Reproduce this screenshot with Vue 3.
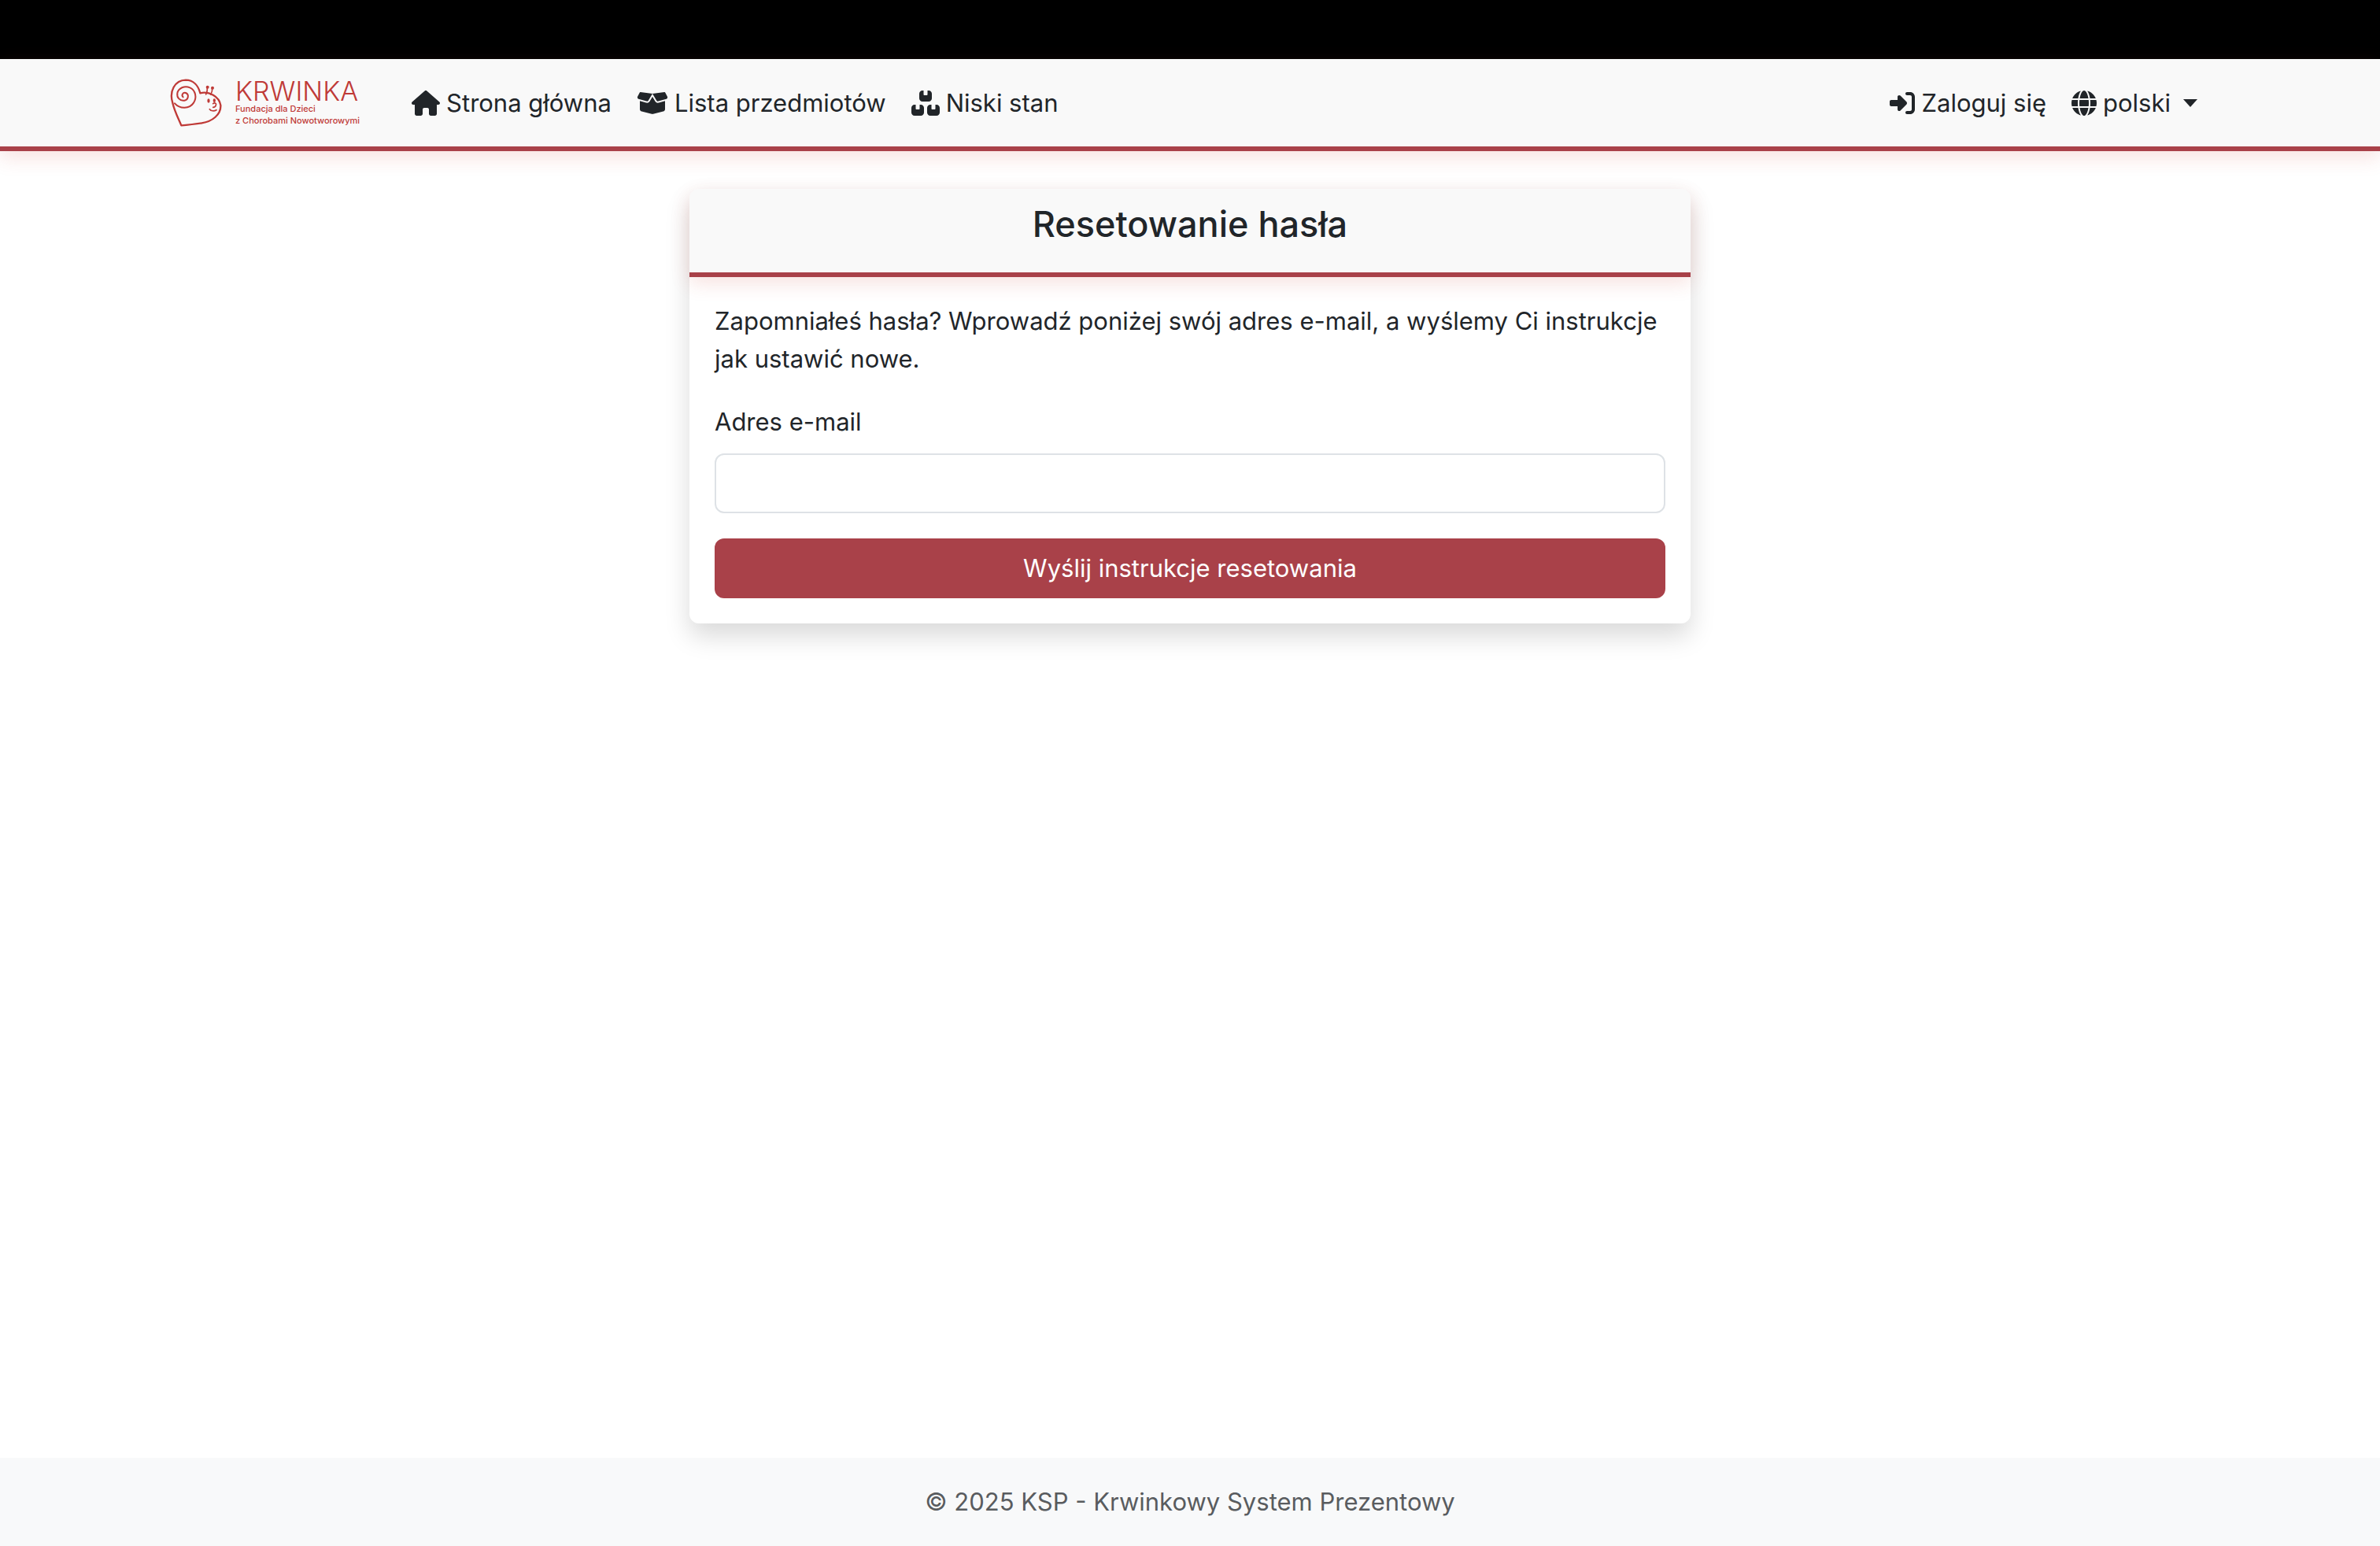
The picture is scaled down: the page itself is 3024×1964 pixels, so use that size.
<script setup>
import { ref } from 'vue'

const email = ref('')
const language = ref('pl')

const links = [
  {
    label: 'Strona główna',
    width: 576,
    path: 'M575.8 255.5c0 18-15 32.1-32 32.1h-32l.7 160.2c0 2.7-.2 5.4-.5 8.1V472c0 22.1-17.9 40-40 40H456c-1.1 0-2.2 0-3.3-.1c-1.4 .1-2.8 .1-4.2 .1H416 392c-22.1 0-40-17.9-40-40V448 384c0-17.7-14.3-32-32-32H256c-17.7 0-32 14.3-32 32v64 24c0 22.1-17.9 40-40 40H160 128.1c-1.5 0-3-.1-4.5-.2c-1.2 .1-2.4 .2-3.6 .2H104c-22.1 0-40-17.9-40-40V360c0-.9 0-1.9 .1-2.8V287.6H32c-18 0-32-14-32-32.1c0-9 3-17 10-24L266.4 8c7-7 15-8 22-8s15 2 21 7L564.8 231.5c8 7 12 15 11 24z'
  },
  {
    label: 'Lista przedmiotów',
    width: 640,
    path: 'M58.9 42.1c3-6.1 9.6-9.6 16.3-8.7L320 64 564.8 33.4c6.7-.8 13.3 2.7 16.3 8.7l41.7 83.4c9 17.9-.6 39.6-19.8 45.1L439.6 217.3c-13.9 4-28.8-1.9-36.2-14.3L320 64 236.6 203c-7.4 12.4-22.3 18.3-36.2 14.3L37.1 170.6c-19.3-5.5-28.8-27.2-19.8-45.1L58.9 42.1zM321.1 128l54.9 91.4c14.9 24.8 44.6 36.6 72.5 28.6L576 211.6v167c0 22-15 41.2-36.4 46.6l-204.1 51c-10.2 2.6-20.9 2.6-31 0l-204.1-51C79 419.7 64 400.5 64 378.5v-167L191.6 248c27.8 8 57.6-3.8 72.5-28.6L318.9 128h2.2z'
  },
  {
    label: 'Niski stan',
    width: 576,
    path: 'M248 0H224c-35.3 0-64 28.7-64 64V160c0 35.3 28.7 64 64 64H352c35.3 0 64-28.7 64-64V64c0-35.3-28.7-64-64-64H328V80c0 8.8-7.2 16-16 16H264c-8.8 0-16-7.2-16-16V0zM64 288c-35.3 0-64 28.7-64 64V448c0 35.3 28.7 64 64 64H192c35.3 0 64-28.7 64-64V352c0-35.3-28.7-64-64-64H168v80c0 8.8-7.2 16-16 16H104c-8.8 0-16-7.2-16-16V288H64zM384 512H512c35.3 0 64-28.7 64-64V352c0-35.3-28.7-64-64-64H488v80c0 8.8-7.2 16-16 16H424c-8.8 0-16-7.2-16-16V288H384c-35.3 0-64 28.7-64 64V448c0 35.3 28.7 64 64 64z'
  }
]
</script>

<template>
  <div class="page">
    <div class="strip"></div>
    <header class="navbar">
      <div class="container">
        <a class="brand" href="#">
          <svg class="snail" viewBox="0 0 198 183" aria-hidden="true">
            <g fill="none" stroke="currentColor" stroke-linecap="round" stroke-linejoin="round">
              <path stroke-width="7" d="M10 92C-4 48 18 6 60 5c30 0 48 22 55 50c34-8 72 12 78 46c2 36-32 62-72 68c-26 5-50 6-78 9C32 152 16 120 10 92" />
              <path stroke-width="6" d="M50 70c-8-8 0-20 10-16c14 6 10 26-5 29c-17 3-30-12-27-28c4-20 28-30 48-21c22 10 27 38 14 58c-16 24-52 24-72 2" />
              <path stroke-width="5" d="M137 60C142 50 143 42 142 33M155 60c5-8 7-16 6-26" />
              <path stroke-width="5" d="M151 116c5 7 16 9 26 3M164 95c7-5 14-1 11 6c-1 5-6 8-11 8" />
            </g>
            <g fill="currentColor">
              <circle cx="143" cy="32" r="6" />
              <circle cx="162" cy="35" r="6" />
              <ellipse cx="147" cy="84" rx="5" ry="8" />
              <ellipse cx="169" cy="83" rx="5" ry="7" />
            </g>
          </svg>
          <span class="brand-text">
            <span class="brand-name">KRWINKA</span>
            <span class="brand-line">Fundacja dla Dzieci</span>
            <span class="brand-line">z Chorobami Nowotworowymi</span>
          </span>
        </a>
        <nav class="links">
          <a v-for="link in links" :key="link.label" class="link" href="#">
            <svg class="icon" :viewBox="`0 0 ${link.width} 512`" aria-hidden="true"><path :d="link.path" /></svg>
            <span>{{ link.label }}</span>
          </a>
        </nav>
        <div class="links">
          <a class="link" href="#">
            <svg class="icon" viewBox="0 0 512 512" aria-hidden="true"><path d="M217.9 105.9L340.7 228.7c7.2 7.2 11.3 17.1 11.3 27.3s-4.1 20.1-11.3 27.3L217.9 406.1c-6.4 6.4-15 9.9-24 9.9c-18.7 0-33.9-15.2-33.9-33.9l0-62.1L32 320c-17.7 0-32-14.3-32-32l0-64c0-17.7 14.3-32 32-32l128 0 0-62.1c0-18.7 15.2-33.9 33.9-33.9c9 0 17.6 3.6 24 9.9zM352 416l64 0c17.7 0 32-14.3 32-32l0-256c0-17.7-14.3-32-32-32l-64 0c-17.7 0-32-14.3-32-32s14.3-32 32-32l64 0c53 0 96 43 96 96l0 256c0 53-43 96-96 96l-64 0c-17.7 0-32-14.3-32-32s14.3-32 32-32z" /></svg>
            <span>Zaloguj się</span>
          </a>
          <label class="link">
            <svg class="icon" viewBox="0 0 512 512" aria-hidden="true"><path d="M352 256c0 22.2-1.2 43.6-3.3 64H163.3c-2.2-20.4-3.3-41.8-3.3-64s1.2-43.6 3.3-64H348.7c2.2 20.4 3.3 41.8 3.3 64zm28.8-64H503.9c5.3 20.5 8.1 41.9 8.1 64s-2.8 43.5-8.1 64H380.8c2.1-20.6 3.2-42 3.2-64s-1.1-43.4-3.2-64zm112.6-32H376.7c-10-63.9-29.8-117.4-55.3-151.6c78.3 20.7 142 77.5 171.9 151.6zm-149.1 0H167.7c6.1-36.4 15.5-68.6 27-94.7c10.5-23.6 22.2-40.7 33.5-51.5C239.4 3.2 248.7 0 256 0s16.6 3.2 27.8 13.8c11.3 10.8 23 27.9 33.5 51.5c11.6 26 20.9 58.2 27 94.7zm-209 0H18.6C48.6 85.9 112.2 29.1 190.6 8.4C165.1 42.6 145.3 96.1 135.3 160zM8.1 192H131.2c-2.1 20.6-3.2 42-3.2 64s1.1 43.4 3.2 64H8.1C2.8 299.5 0 278.1 0 256s2.8-43.5 8.1-64zM194.7 446.6c-11.6-26-20.9-58.2-27-94.6H344.3c-6.1 36.4-15.5 68.6-27 94.6c-10.5 23.6-22.2 40.7-33.5 51.5C272.6 508.8 263.3 512 256 512s-16.6-3.2-27.8-13.8c-11.3-10.8-23-27.9-33.5-51.5zM135.3 352c10 63.9 29.8 117.4 55.3 151.6C112.2 482.9 48.6 426.1 18.6 352H135.3zm358.1 0c-30 74.1-93.6 130.9-171.9 151.6c25.5-34.2 45.2-87.7 55.3-151.6H493.4z" /></svg>
            <select v-model="language" class="language">
              <option value="pl">polski</option>
            </select>
            <span class="caret"></span>
          </label>
        </div>
      </div>
    </header>

    <main class="content">
      <section class="card">
        <div class="card-header">
          <h1 class="title">Resetowanie hasła</h1>
        </div>
        <form class="card-body" @submit.prevent>
          <p class="intro">Zapomniałeś hasła? Wprowadź poniżej swój adres e-mail, a wyślemy Ci instrukcje jak ustawić nowe.</p>
          <label class="label" for="email">Adres e-mail</label>
          <input id="email" v-model="email" class="input" type="email">
          <button class="submit" type="submit">Wyślij instrukcje resetowania</button>
        </form>
      </section>
    </main>

    <footer class="footer">© 2025 KSP - Krwinkowy System Prezentowy</footer>
  </div>
</template>

<style>
body {
  margin: 0;
  background: #fff;
}
</style>

<style scoped>
.page {
  display: flex;
  flex-direction: column;
  min-height: 100vh;
  color: #212529;
  font-family: Inter, "Liberation Sans", sans-serif;
  font-size: 31px;
  line-height: 48px;
}

.strip {
  height: 75px;
  background: #000;
}

.navbar {
  padding: 16px 0;
  border-bottom: 6px solid #a94149;
  background: #f9f9f9;
  box-shadow: 0 8px 24px rgba(200, 60, 50, 0.15);
}

.container {
  display: flex;
  align-items: center;
  box-sizing: border-box;
  max-width: 2640px;
  min-height: 79px;
  margin: 0 auto;
  padding: 0 24px;
}

.brand {
  display: flex;
  align-items: center;
  gap: 17px;
  margin-right: 50px;
  color: #bf3a37;
  text-decoration: none;
}

.snail {
  width: 66px;
  height: 61px;
}

.brand-text {
  display: flex;
  flex-direction: column;
}

.brand-name {
  font-size: 34px;
  font-weight: 300;
  line-height: 30px;
}

.brand-line {
  font-size: 11px;
  font-weight: 500;
  line-height: 15px;
}

.links {
  display: flex;
}

.links:last-child {
  margin-left: auto;
}

.link {
  display: flex;
  align-items: center;
  gap: 8px;
  padding: 0 16px;
  color: inherit;
  text-decoration: none;
}

.icon {
  height: 32px;
  fill: currentColor;
}

.language {
  padding: 0;
  border: 0;
  appearance: none;
  background: transparent;
  color: inherit;
  font: inherit;
}

.caret {
  margin-left: 8px;
  border-top: 10px solid;
  border-right: 9px solid transparent;
  border-left: 9px solid transparent;
}

.content {
  flex: 1;
  padding: 48px 24px;
}

.card {
  max-width: 1272px;
  margin: 0 auto;
  border-radius: 12px;
  background: #fff;
  box-shadow: 0 16px 32px rgba(0, 0, 0, 0.15);
}

.card-header {
  padding: 16px 32px 32px;
  border-bottom: 6px solid #a94149;
  border-radius: 12px 12px 0 0;
  background: #f9f9f9;
  box-shadow: 0 8px 24px rgba(200, 60, 50, 0.15);
}

.title {
  margin: 0;
  font-size: 45px;
  font-weight: 500;
  line-height: 58px;
  text-align: center;
}

.card-body {
  display: flex;
  flex-direction: column;
  padding: 32px;
}

.intro {
  margin: 0 0 32px;
}

.label {
  align-self: flex-start;
  margin-bottom: 16px;
}

.input {
  box-sizing: border-box;
  height: 76px;
  margin-bottom: 32px;
  padding: 12px 24px;
  border: 2px solid #dee2e6;
  border-radius: 12px;
  background: #fff;
  color: inherit;
  font: inherit;
}

.submit {
  padding: 14px 24px;
  border: 0;
  border-radius: 12px;
  background: #a94149;
  color: #fff;
  font: inherit;
}

.footer {
  padding: 32px 24px;
  background: #f8f9fa;
  color: #595c5f;
  text-align: center;
}
</style>
